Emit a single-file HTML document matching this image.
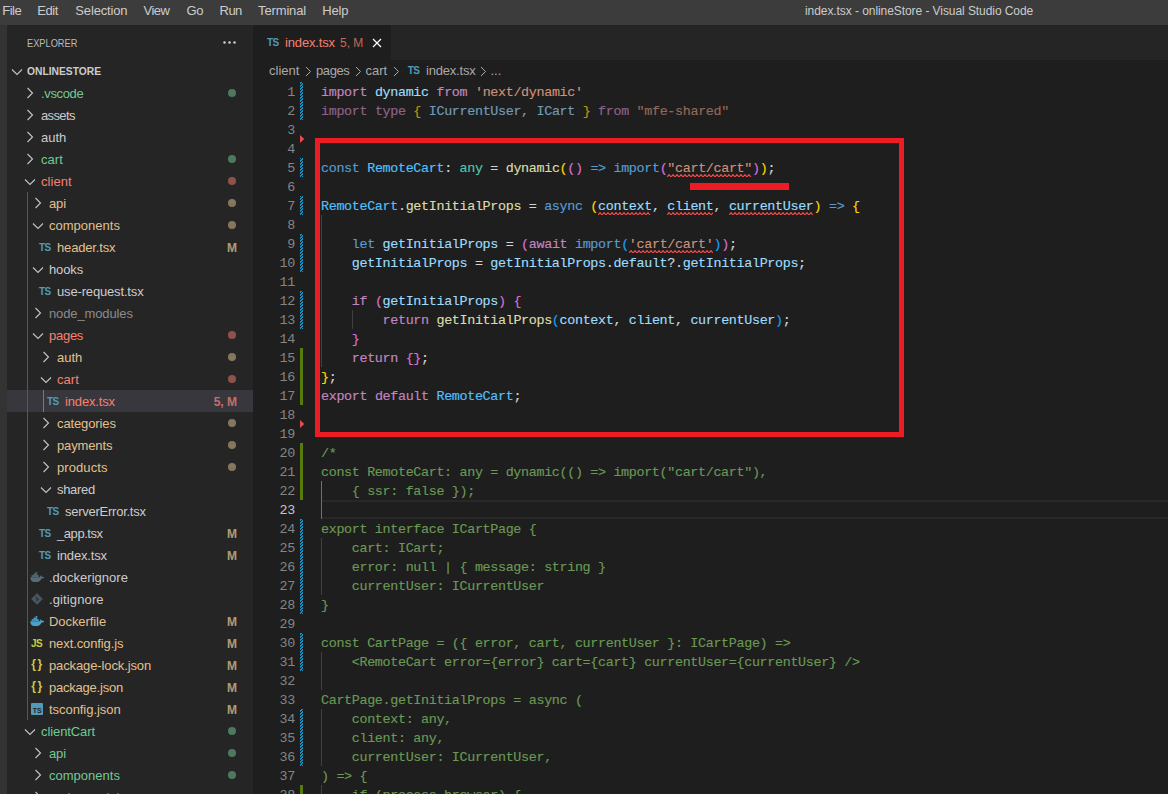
<!DOCTYPE html>
<html lang="en"><head><meta charset="utf-8"><title>index.tsx - onlineStore - Visual Studio Code</title>
<style>
*{box-sizing:border-box;margin:0;padding:0}
html,body{width:1168px;height:794px;overflow:hidden;background:#1e1e1e}
body{position:relative;font-family:"Liberation Sans",sans-serif;color:#ccc;-webkit-font-smoothing:antialiased}
.abs{position:absolute}
#title{left:0;top:0;width:1168px;height:25px;background:#3c3c3c}
#title .mi{position:absolute;top:0;height:21px;line-height:21px;font-size:13px;color:#ccc;white-space:nowrap;letter-spacing:-.15px}
#title .wt{position:absolute;top:1px;height:21px;line-height:21px;font-size:12px;color:#ccc;white-space:nowrap;letter-spacing:-.07px}
#act{left:0;top:25px;width:7px;height:769px;background:#333}
#side{left:7px;top:25px;width:246px;height:769px;background:#252526;overflow:hidden}
#side .hdr{position:absolute;left:20px;top:8px;height:20px;line-height:20px;font-size:11px;color:#bbb;white-space:nowrap;transform:scaleX(.84);transform-origin:0 0}
#side .dots{position:absolute;left:216px;top:16px;width:13px;height:3px}
.row{position:absolute;left:0;width:246px;height:22px;line-height:22px;font-size:13px;white-space:nowrap}
.row.sel{background:#37373d}
.row .lbl{position:absolute;top:1px}
.row .badge{position:absolute;top:1px;right:16px;font-size:12px;font-weight:bold;opacity:.75}
.row .dot{position:absolute;top:7px;left:221px;width:8px;height:8px;border-radius:50%}
.row svg{position:absolute}
.g{color:#73c991}.r{color:#f88070}.t{color:#e2c08d}.d{color:#ccc}.dim{color:#8c8c8c}
.dot.g{background:#4d7a5e}.dot.r{background:#8e524a}.dot.t{background:#86765c}
.ts{position:absolute;top:1px;font-size:10px;font-weight:bold;color:#519aba;letter-spacing:-.6px}
.guide{position:absolute;width:1px;background:#585858}
#tabs{left:253px;top:25px;width:915px;height:35px;background:#252526}
#tab{left:0;top:0;width:138px;height:35px;background:#1e1e1e}
#bc{left:253px;top:60px;width:915px;height:22px;background:#1e1e1e;font-size:13px;line-height:22px;color:#a9a9a9;white-space:nowrap}
#ed{left:253px;top:82px;width:915px;height:712px;background:#1e1e1e;overflow:hidden}
.ln{position:absolute;left:0;width:41.9px;text-align:right;height:19px;line-height:21px;font-family:"Liberation Mono",monospace;font-size:13.4px;letter-spacing:-.341px;color:#858585}
.ln.cur{color:#c6c6c6}
.cl{position:absolute;left:68px;height:19px;line-height:21px;font-family:"Liberation Mono",monospace;font-size:13.4px;letter-spacing:-.341px;-webkit-text-stroke:.15px;white-space:pre;color:#d4d4d4}
.k{color:#c586c0}.v{color:#9cdcfe}.b{color:#569cd6}.ty{color:#4ec9b0}.s{color:#ce9178}.f{color:#dcdcaa}.c{color:#6a9955}.cn{color:#4fc1ff}
.b1{color:#ffd700}.b2{color:#da70d6}.b3{color:#179fff}
.sq{text-decoration:underline wavy #f14c4c;text-decoration-thickness:1px;text-underline-offset:2px;text-decoration-skip-ink:none}
.fade{opacity:.66}
.gm{position:absolute;left:47px;width:3px}
.ga{position:absolute;left:47px;width:3px;background:#587c0c}
.ig{position:absolute;width:1px;background:#404040}
</style></head>
<body>
<div id="title" class="abs">
<span class="mi" style="left:2.2px;letter-spacing:-0.45px">File</span>
<span class="mi" style="left:37.3px;letter-spacing:-0.45px">Edit</span>
<span class="mi" style="left:75.3px;letter-spacing:-0.15px">Selection</span>
<span class="mi" style="left:143.4px;letter-spacing:-0.45px">View</span>
<span class="mi" style="left:186.6px;letter-spacing:-0.4px">Go</span>
<span class="mi" style="left:219.5px;letter-spacing:-0.5px">Run</span>
<span class="mi" style="left:258.1px;letter-spacing:-0.15px">Terminal</span>
<span class="mi" style="left:322.2px;letter-spacing:-0.15px">Help</span>
<span class="wt" style="left:805px">index.tsx - onlineStore - Visual Studio Code</span>
</div>
<div id="act" class="abs"></div>
<div id="side" class="abs">
<div class="hdr">EXPLORER</div>
<svg class="dots" viewBox="0 0 13 3"><circle cx="1.5" cy="1.5" r="1.25" fill="#d0d0d0"/><circle cx="6.5" cy="1.5" r="1.25" fill="#d0d0d0"/><circle cx="11.5" cy="1.5" r="1.25" fill="#d0d0d0"/></svg>
<div class="row" style="top:35px"><svg style="left:4.0px;top:7.5px" width="12" height="8" viewBox="0 0 12 8"><path d="M1 1.5 L6 6.5 L11 1.5" fill="none" stroke="#c5c5c5" stroke-width="1.1"/></svg><span class="lbl" style="left:20px;top:0;font-size:11px;font-weight:bold;color:#ccc;transform:scaleX(.935);transform-origin:0 0">ONLINESTORE</span></div>
<div class="row" style="top:57px"><svg style="left:18.8px;top:5px" width="8" height="12" viewBox="0 0 8 12"><path d="M1.5 1 L6.5 6 L1.5 11" fill="none" stroke="#c5c5c5" stroke-width="1.1"/></svg><span class="lbl g" style="left:34px;letter-spacing:-0.359px">.vscode</span><span class="dot g"></span></div>
<div class="row" style="top:79px"><svg style="left:18.8px;top:5px" width="8" height="12" viewBox="0 0 8 12"><path d="M1.5 1 L6.5 6 L1.5 11" fill="none" stroke="#c5c5c5" stroke-width="1.1"/></svg><span class="lbl d" style="left:34px;letter-spacing:-0.63px">assets</span></div>
<div class="row" style="top:101px"><svg style="left:18.8px;top:5px" width="8" height="12" viewBox="0 0 8 12"><path d="M1.5 1 L6.5 6 L1.5 11" fill="none" stroke="#c5c5c5" stroke-width="1.1"/></svg><span class="lbl d" style="left:34px;letter-spacing:-0.002px">auth</span></div>
<div class="row" style="top:123px"><svg style="left:18.8px;top:5px" width="8" height="12" viewBox="0 0 8 12"><path d="M1.5 1 L6.5 6 L1.5 11" fill="none" stroke="#c5c5c5" stroke-width="1.1"/></svg><span class="lbl g" style="left:34px;letter-spacing:0.032px">cart</span><span class="dot g"></span></div>
<div class="row" style="top:145px"><svg style="left:16.8px;top:7.5px" width="12" height="8" viewBox="0 0 12 8"><path d="M1 1.5 L6 6.5 L11 1.5" fill="none" stroke="#c5c5c5" stroke-width="1.1"/></svg><span class="lbl r" style="left:34px;letter-spacing:0.057px">client</span><span class="dot r"></span></div>
<div class="row" style="top:167px"><svg style="left:26.8px;top:5px" width="8" height="12" viewBox="0 0 8 12"><path d="M1.5 1 L6.5 6 L1.5 11" fill="none" stroke="#c5c5c5" stroke-width="1.1"/></svg><span class="lbl t" style="left:42px;letter-spacing:-0.153px">api</span><span class="dot t"></span></div>
<div class="row" style="top:189px"><svg style="left:24.8px;top:7.5px" width="12" height="8" viewBox="0 0 12 8"><path d="M1 1.5 L6 6.5 L11 1.5" fill="none" stroke="#c5c5c5" stroke-width="1.1"/></svg><span class="lbl t" style="left:42px;letter-spacing:0.017px">components</span><span class="dot t"></span></div>
<div class="row" style="top:211px"><span class="ts" style="left:32px">TS</span><span class="lbl t" style="left:50px;letter-spacing:-0.16px">header.tsx</span><span class="badge t">M</span></div>
<div class="row" style="top:233px"><svg style="left:24.8px;top:7.5px" width="12" height="8" viewBox="0 0 12 8"><path d="M1 1.5 L6 6.5 L11 1.5" fill="none" stroke="#c5c5c5" stroke-width="1.1"/></svg><span class="lbl d" style="left:42px;letter-spacing:-0.12px">hooks</span></div>
<div class="row" style="top:255px"><span class="ts" style="left:32px">TS</span><span class="lbl d" style="left:50px;letter-spacing:-0.159px">use-request.tsx</span></div>
<div class="row" style="top:277px"><svg style="left:26.8px;top:5px" width="8" height="12" viewBox="0 0 8 12"><path d="M1.5 1 L6.5 6 L1.5 11" fill="none" stroke="#c5c5c5" stroke-width="1.1"/></svg><span class="lbl dim" style="left:42px;letter-spacing:-0.125px">node_modules</span></div>
<div class="row" style="top:299px"><svg style="left:24.8px;top:7.5px" width="12" height="8" viewBox="0 0 12 8"><path d="M1 1.5 L6 6.5 L11 1.5" fill="none" stroke="#c5c5c5" stroke-width="1.1"/></svg><span class="lbl r" style="left:42px;letter-spacing:-0.264px">pages</span><span class="dot r"></span></div>
<div class="row" style="top:321px"><svg style="left:34.8px;top:5px" width="8" height="12" viewBox="0 0 8 12"><path d="M1.5 1 L6.5 6 L1.5 11" fill="none" stroke="#c5c5c5" stroke-width="1.1"/></svg><span class="lbl t" style="left:50px;letter-spacing:-0.002px">auth</span><span class="dot t"></span></div>
<div class="row" style="top:343px"><svg style="left:32.8px;top:7.5px" width="12" height="8" viewBox="0 0 12 8"><path d="M1 1.5 L6 6.5 L11 1.5" fill="none" stroke="#c5c5c5" stroke-width="1.1"/></svg><span class="lbl r" style="left:50px;letter-spacing:0.032px">cart</span><span class="dot r"></span></div>
<div class="row sel" style="top:365px"><span class="ts" style="left:40px">TS</span><span class="lbl r" style="left:58px;letter-spacing:-0.157px">index.tsx</span><span class="badge r">5, M</span></div>
<div class="row" style="top:387px"><svg style="left:34.8px;top:5px" width="8" height="12" viewBox="0 0 8 12"><path d="M1.5 1 L6.5 6 L1.5 11" fill="none" stroke="#c5c5c5" stroke-width="1.1"/></svg><span class="lbl t" style="left:50px;letter-spacing:-0.118px">categories</span><span class="dot t"></span></div>
<div class="row" style="top:409px"><svg style="left:34.8px;top:5px" width="8" height="12" viewBox="0 0 8 12"><path d="M1.5 1 L6.5 6 L1.5 11" fill="none" stroke="#c5c5c5" stroke-width="1.1"/></svg><span class="lbl t" style="left:50px;letter-spacing:-0.135px">payments</span><span class="dot t"></span></div>
<div class="row" style="top:431px"><svg style="left:34.8px;top:5px" width="8" height="12" viewBox="0 0 8 12"><path d="M1.5 1 L6.5 6 L1.5 11" fill="none" stroke="#c5c5c5" stroke-width="1.1"/></svg><span class="lbl t" style="left:50px;letter-spacing:0.077px">products</span><span class="dot t"></span></div>
<div class="row" style="top:453px"><svg style="left:32.8px;top:7.5px" width="12" height="8" viewBox="0 0 12 8"><path d="M1 1.5 L6 6.5 L11 1.5" fill="none" stroke="#c5c5c5" stroke-width="1.1"/></svg><span class="lbl d" style="left:50px;letter-spacing:-0.308px">shared</span></div>
<div class="row" style="top:475px"><span class="ts" style="left:40px">TS</span><span class="lbl d" style="left:58px;letter-spacing:-0.255px">serverError.tsx</span></div>
<div class="row" style="top:497px"><span class="ts" style="left:32px">TS</span><span class="lbl d" style="left:50px;letter-spacing:-0.432px">_app.tsx</span><span class="badge t">M</span></div>
<div class="row" style="top:519px"><span class="ts" style="left:32px">TS</span><span class="lbl d" style="left:50px;letter-spacing:-0.157px">index.tsx</span><span class="badge t">M</span></div>
<div class="row" style="top:541px"><svg style="left:22.7px;top:5.5px" width="14.5" height="10.5" viewBox="0 0 14.5 10.5"><path d="M0.2 5.2 H9.6 C10 4.2 10.4 3.6 11 3.2 C11.6 3.8 11.8 4.4 11.7 5 C12.6 4.6 13.6 4.7 14.3 5.2 C13.8 6.2 12.8 6.6 11.6 6.5 C10.6 9 8.4 10.3 5.6 10.3 C2.4 10.3 0.4 8.6 0.2 5.2 Z" fill="#566b77"/><rect x="1.6" y="3.2" width="7.2" height="1.7" fill="#566b77"/><rect x="3.6" y="1.6" width="3.6" height="1.5" fill="#566b77"/><rect x="5.6" y="0" width="1.7" height="1.5" fill="#566b77"/></svg><span class="lbl d" style="left:42px;letter-spacing:0.009px">.dockerignore</span></div>
<div class="row" style="top:563px"><svg style="left:23.8px;top:5px" width="12" height="12" viewBox="0 0 12 12"><rect x="1.8" y="1.8" width="8.4" height="8.4" rx="0.8" transform="rotate(45 6 6)" fill="#46575f"/><path d="M4.6 3.6 L6 5 V8.4 M6 5 L7.8 6.8" stroke="#252526" stroke-width="0.9" fill="none"/></svg><span class="lbl d" style="left:42px;letter-spacing:0.122px">.gitignore</span></div>
<div class="row" style="top:585px"><svg style="left:22.7px;top:5.5px" width="14.5" height="10.5" viewBox="0 0 14.5 10.5"><path d="M0.2 5.2 H9.6 C10 4.2 10.4 3.6 11 3.2 C11.6 3.8 11.8 4.4 11.7 5 C12.6 4.6 13.6 4.7 14.3 5.2 C13.8 6.2 12.8 6.6 11.6 6.5 C10.6 9 8.4 10.3 5.6 10.3 C2.4 10.3 0.4 8.6 0.2 5.2 Z" fill="#4ba0c8"/><rect x="1.6" y="3.2" width="7.2" height="1.7" fill="#4ba0c8"/><rect x="3.6" y="1.6" width="3.6" height="1.5" fill="#4ba0c8"/><rect x="5.6" y="0" width="1.7" height="1.5" fill="#4ba0c8"/></svg><span class="lbl t" style="left:42px;letter-spacing:-0.07px">Dockerfile</span><span class="badge t">M</span></div>
<div class="row" style="top:607px"><span class="ts" style="left:24px;color:#cbcb41">JS</span><span class="lbl t" style="left:42px;letter-spacing:-0.106px">next.config.js</span><span class="badge t">M</span></div>
<div class="row" style="top:629px"><span class="ts" style="left:24.3px;top:-1px;color:#cbcb41;font-size:12px;letter-spacing:1.6px">{}</span><span class="lbl t" style="left:42px;letter-spacing:-0.121px">package-lock.json</span><span class="badge t">M</span></div>
<div class="row" style="top:651px"><span class="ts" style="left:24.3px;top:-1px;color:#cbcb41;font-size:12px;letter-spacing:1.6px">{}</span><span class="lbl t" style="left:42px;letter-spacing:-0.219px">package.json</span><span class="badge t">M</span></div>
<div class="row" style="top:673px"><svg style="left:24px;top:5px" width="12" height="12" viewBox="0 0 12 12"><rect width="12" height="12" rx="1" fill="#519aba"/><text x="6.2" y="10" font-family="Liberation Sans,sans-serif" font-size="7" font-weight="bold" fill="#252526" text-anchor="middle">TS</text></svg><span class="lbl t" style="left:42px;letter-spacing:-0.052px">tsconfig.json</span><span class="badge t">M</span></div>
<div class="row" style="top:695px"><svg style="left:16.8px;top:7.5px" width="12" height="8" viewBox="0 0 12 8"><path d="M1 1.5 L6 6.5 L11 1.5" fill="none" stroke="#c5c5c5" stroke-width="1.1"/></svg><span class="lbl g" style="left:34px;letter-spacing:-0.092px">clientCart</span><span class="dot g"></span></div>
<div class="row" style="top:717px"><svg style="left:26.8px;top:5px" width="8" height="12" viewBox="0 0 8 12"><path d="M1.5 1 L6.5 6 L1.5 11" fill="none" stroke="#c5c5c5" stroke-width="1.1"/></svg><span class="lbl g" style="left:42px;letter-spacing:-0.153px">api</span><span class="dot g"></span></div>
<div class="row" style="top:739px"><svg style="left:26.8px;top:5px" width="8" height="12" viewBox="0 0 8 12"><path d="M1.5 1 L6.5 6 L1.5 11" fill="none" stroke="#c5c5c5" stroke-width="1.1"/></svg><span class="lbl g" style="left:42px;letter-spacing:0.017px">components</span><span class="dot g"></span></div>
<div class="row" style="top:761px"><svg style="left:26.8px;top:5px" width="8" height="12" viewBox="0 0 8 12"><path d="M1.5 1 L6.5 6 L1.5 11" fill="none" stroke="#c5c5c5" stroke-width="1.1"/></svg><span class="lbl dim" style="left:42px;letter-spacing:-0.125px">node_modules</span></div>
<div class="guide" style="left:20px;top:167px;height:528px"></div>
<div class="guide" style="left:36px;top:365px;height:22px;background:#7a7a7a"></div>
</div>
<div id="tabs" class="abs"><div id="tab" class="abs"><span class="ts" style="left:14px;top:1px;line-height:34px">TS</span><span class="abs r" style="left:32px;top:0;line-height:36px;font-size:13px;white-space:nowrap;letter-spacing:-.15px">index.tsx</span><span class="abs" style="left:87px;top:0;line-height:36px;font-size:12px;color:#c4695c;white-space:nowrap">5, M</span><svg class="abs" style="left:119px;top:13px" width="10" height="10" viewBox="0 0 10 10"><path d="M1 1 L9 9 M9 1 L1 9" stroke="#fff" stroke-width="1.2" fill="none"/></svg></div></div>
<div id="bc" class="abs"><span class="abs" style="left:16px">client</span><svg class="abs" style="left:51.5px;top:6px" width="7" height="11" viewBox="0 0 7 11"><path d="M1 1 L5.5 5.5 L1 10" fill="none" stroke="#a9a9a9" stroke-width="1"/></svg><span class="abs" style="left:63px;letter-spacing:-.4px">pages</span><svg class="abs" style="left:101.5px;top:6px" width="7" height="11" viewBox="0 0 7 11"><path d="M1 1 L5.5 5.5 L1 10" fill="none" stroke="#a9a9a9" stroke-width="1"/></svg><span class="abs" style="left:112.5px">cart</span><svg class="abs" style="left:139.5px;top:6px" width="7" height="11" viewBox="0 0 7 11"><path d="M1 1 L5.5 5.5 L1 10" fill="none" stroke="#a9a9a9" stroke-width="1"/></svg><span class="ts" style="left:154.8px;line-height:21px;top:0">TS</span><span class="abs" style="left:173px;letter-spacing:-.2px">index.tsx</span><svg class="abs" style="left:227px;top:6px" width="7" height="11" viewBox="0 0 7 11"><path d="M1 1 L5.5 5.5 L1 10" fill="none" stroke="#a9a9a9" stroke-width="1"/></svg><span class="abs" style="left:237.5px">...</span></div>
<div id="ed" class="abs">
<div class="abs" style="left:68px;top:418px;width:847px;height:19px;border-top:2px solid #282828;border-bottom:2px solid #282828"></div>
<div class="ln" style="top:0px">1</div><div class="cl" style="top:0px"><span class="k">import</span> <span class="v">dynamic</span> <span class="k">from</span> <span class="s">&#x27;next/dynamic&#x27;</span></div>
<div class="ln" style="top:19px">2</div><div class="cl" style="top:19px"><span class="fade"><span class="k">import</span> <span class="k">type</span> <span class="b1">{</span> <span class="v">ICurrentUser</span>, <span class="v">ICart</span> <span class="b1">}</span> <span class="k">from</span> <span class="s">&quot;mfe-shared&quot;</span></span></div>
<div class="ln" style="top:38px">3</div>
<div class="ln" style="top:57px">4</div>
<div class="ln" style="top:76px">5</div><div class="cl" style="top:76px"><span class="b">const</span> <span class="cn">RemoteCart</span>: <span class="ty">any</span> = <span class="f">dynamic</span><span class="b1">(</span><span class="b2">()</span> <span class="b">=&gt;</span> <span class="b">import</span><span class="b2">(</span><span class="s">"cart/cart"</span><span class="b2">)</span><span class="b1">)</span>;</div>
<div class="ln" style="top:95px">6</div>
<div class="ln" style="top:114px">7</div><div class="cl" style="top:114px"><span class="cn">RemoteCart</span>.<span class="f">getInitialProps</span> = <span class="b">async</span> <span class="b1">(</span><span class="v">context</span>, <span class="v">client</span>, <span class="v">currentUser</span><span class="b1">)</span> <span class="b">=&gt;</span> <span class="b1">{</span></div>
<div class="ln" style="top:133px">8</div>
<div class="ln" style="top:152px">9</div><div class="cl" style="top:152px">    <span class="b">let</span> <span class="v">getInitialProps</span> = <span class="b2">(</span><span class="k">await</span> <span class="b">import</span><span class="b3">(</span><span class="s">'cart/cart'</span><span class="b3">)</span><span class="b2">)</span>;</div>
<div class="ln" style="top:171px">10</div><div class="cl" style="top:171px">    <span class="v">getInitialProps</span> = <span class="v">getInitialProps</span>.<span class="v">default</span>?.<span class="v">getInitialProps</span>;</div>
<div class="ln" style="top:190px">11</div>
<div class="ln" style="top:209px">12</div><div class="cl" style="top:209px">    <span class="k">if</span> <span class="b2">(</span><span class="v">getInitialProps</span><span class="b2">)</span> <span class="b2">{</span></div>
<div class="ln" style="top:228px">13</div><div class="cl" style="top:228px">        <span class="k">return</span> <span class="f">getInitialProps</span><span class="b3">(</span><span class="v">context</span>, <span class="v">client</span>, <span class="v">currentUser</span><span class="b3">)</span>;</div>
<div class="ln" style="top:247px">14</div><div class="cl" style="top:247px">    <span class="b2">}</span></div>
<div class="ln" style="top:266px">15</div><div class="cl" style="top:266px">    <span class="k">return</span> <span class="b2">{}</span>;</div>
<div class="ln" style="top:285px">16</div><div class="cl" style="top:285px"><span class="b1">}</span>;</div>
<div class="ln" style="top:304px">17</div><div class="cl" style="top:304px"><span class="k">export</span> <span class="k">default</span> <span class="cn">RemoteCart</span>;</div>
<div class="ln" style="top:323px">18</div>
<div class="ln" style="top:342px">19</div>
<div class="ln" style="top:361px">20</div><div class="cl" style="top:361px"><span class="c">/*</span></div>
<div class="ln" style="top:380px">21</div><div class="cl" style="top:380px"><span class="c">const RemoteCart: any = dynamic(() =&gt; import(&quot;cart/cart&quot;),</span></div>
<div class="ln" style="top:399px">22</div><div class="cl" style="top:399px"><span class="c">    { ssr: false });</span></div>
<div class="ln cur" style="top:418px">23</div>
<div class="ln" style="top:437px">24</div><div class="cl" style="top:437px"><span class="c">export interface ICartPage {</span></div>
<div class="ln" style="top:456px">25</div><div class="cl" style="top:456px"><span class="c">    cart: ICart;</span></div>
<div class="ln" style="top:475px">26</div><div class="cl" style="top:475px"><span class="c">    error: null | { message: string }</span></div>
<div class="ln" style="top:494px">27</div><div class="cl" style="top:494px"><span class="c">    currentUser: ICurrentUser</span></div>
<div class="ln" style="top:513px">28</div><div class="cl" style="top:513px"><span class="c">}</span></div>
<div class="ln" style="top:532px">29</div>
<div class="ln" style="top:551px">30</div><div class="cl" style="top:551px"><span class="c">const CartPage = ({ error, cart, currentUser }: ICartPage) =&gt;</span></div>
<div class="ln" style="top:570px">31</div><div class="cl" style="top:570px"><span class="c">    &lt;RemoteCart error={error} cart={cart} currentUser={currentUser} /&gt;</span></div>
<div class="ln" style="top:589px">32</div>
<div class="ln" style="top:608px">33</div><div class="cl" style="top:608px"><span class="c">CartPage.getInitialProps = async (</span></div>
<div class="ln" style="top:627px">34</div><div class="cl" style="top:627px"><span class="c">    context: any,</span></div>
<div class="ln" style="top:646px">35</div><div class="cl" style="top:646px"><span class="c">    client: any,</span></div>
<div class="ln" style="top:665px">36</div><div class="cl" style="top:665px"><span class="c">    currentUser: ICurrentUser,</span></div>
<div class="ln" style="top:684px">37</div><div class="cl" style="top:684px"><span class="c">) =&gt; {</span></div>
<div class="ln" style="top:703px">38</div><div class="cl" style="top:703px"><span class="c">    if (process.browser) {</span></div>
<div class="gm" style="top:0px;height:38px;background:repeating-linear-gradient(-45deg,#1a90c2 0,#1a90c2 1.15px,#1e1e1e 1.15px,#1e1e1e 2.1213px)"></div>
<div class="gm" style="top:76px;height:19px;background:repeating-linear-gradient(-45deg,#1a90c2 0,#1a90c2 1.15px,#1e1e1e 1.15px,#1e1e1e 2.1213px)"></div>
<div class="gm" style="top:114px;height:19px;background:repeating-linear-gradient(-45deg,#1a90c2 0,#1a90c2 1.15px,#1e1e1e 1.15px,#1e1e1e 2.1213px)"></div>
<div class="gm" style="top:152px;height:38px;background:repeating-linear-gradient(-45deg,#1a90c2 0,#1a90c2 1.15px,#1e1e1e 1.15px,#1e1e1e 2.1213px)"></div>
<div class="gm" style="top:209px;height:38px;background:repeating-linear-gradient(-45deg,#1a90c2 0,#1a90c2 1.15px,#1e1e1e 1.15px,#1e1e1e 2.1213px)"></div>
<div class="gm" style="top:437px;height:95px;background:repeating-linear-gradient(-45deg,#1a90c2 0,#1a90c2 1.15px,#1e1e1e 1.15px,#1e1e1e 2.1213px)"></div>
<div class="gm" style="top:551px;height:38px;background:repeating-linear-gradient(-45deg,#1a90c2 0,#1a90c2 1.15px,#1e1e1e 1.15px,#1e1e1e 2.1213px)"></div>
<div class="gm" style="top:627px;height:57px;background:repeating-linear-gradient(-45deg,#1a90c2 0,#1a90c2 1.15px,#1e1e1e 1.15px,#1e1e1e 2.1213px)"></div>
<div class="ga" style="top:266px;height:57px"></div>
<div class="ga" style="top:361px;height:57px"></div>
<div class="ga" style="top:703px;height:19px"></div>
<svg class="abs" style="left:47px;top:53px" width="4.2" height="8" viewBox="0 0 4.2 8"><path d="M0 0 L4.2 4 L0 8 Z" fill="#ee4c4c"/></svg>
<svg class="abs" style="left:47px;top:338px" width="4.2" height="8" viewBox="0 0 4.2 8"><path d="M0 0 L4.2 4 L0 8 Z" fill="#ee4c4c"/></svg>
<div class="ig" style="left:68px;top:133px;height:152px;background:#404040"></div>
<div class="ig" style="left:99px;top:228px;height:19px;background:#404040"></div>
<div class="ig" style="left:68px;top:399px;height:38px;background:#707070"></div>
<div class="ig" style="left:68px;top:456px;height:57px;background:#404040"></div>
<div class="ig" style="left:68px;top:570px;height:38px;background:#404040"></div>
<div class="ig" style="left:68px;top:627px;height:57px;background:#404040"></div>
<div class="ig" style="left:68px;top:703px;height:19px;background:#404040"></div>
<svg class="abs" style="left:414.0px;top:91.8px" width="84.7" height="3.6" viewBox="0 0 84.7 3.6"><polyline points="0.0,3.0 2.0,0.6 4.0,3.0 6.0,0.6 8.0,3.0 10.0,0.6 12.0,3.0 14.0,0.6 16.0,3.0 18.0,0.6 20.0,3.0 22.0,0.6 24.0,3.0 26.0,0.6 28.0,3.0 30.0,0.6 32.0,3.0 34.0,0.6 36.0,3.0 38.0,0.6 40.0,3.0 42.0,0.6 44.0,3.0 46.0,0.6 48.0,3.0 50.0,0.6 52.0,3.0 54.0,0.6 56.0,3.0 58.0,0.6 60.0,3.0 62.0,0.6 64.0,3.0 66.0,0.6 68.0,3.0 70.0,0.6 72.0,3.0 74.0,0.6 76.0,3.0 78.0,0.6 80.0,3.0 82.0,0.6 84.0,3.0" fill="none" stroke="#f14c4c" stroke-width="1.15"/></svg>
<svg class="abs" style="left:344.7px;top:129.8px" width="53.9" height="3.6" viewBox="0 0 53.9 3.6"><polyline points="0.0,3.0 2.0,0.6 4.0,3.0 6.0,0.6 8.0,3.0 10.0,0.6 12.0,3.0 14.0,0.6 16.0,3.0 18.0,0.6 20.0,3.0 22.0,0.6 24.0,3.0 26.0,0.6 28.0,3.0 30.0,0.6 32.0,3.0 34.0,0.6 36.0,3.0 38.0,0.6 40.0,3.0 42.0,0.6 44.0,3.0 46.0,0.6 48.0,3.0 50.0,0.6 52.0,3.0" fill="none" stroke="#f14c4c" stroke-width="1.15"/></svg>
<svg class="abs" style="left:414.0px;top:129.8px" width="46.2" height="3.6" viewBox="0 0 46.2 3.6"><polyline points="0.0,3.0 2.0,0.6 4.0,3.0 6.0,0.6 8.0,3.0 10.0,0.6 12.0,3.0 14.0,0.6 16.0,3.0 18.0,0.6 20.0,3.0 22.0,0.6 24.0,3.0 26.0,0.6 28.0,3.0 30.0,0.6 32.0,3.0 34.0,0.6 36.0,3.0 38.0,0.6 40.0,3.0 42.0,0.6 44.0,3.0 46.0,0.6" fill="none" stroke="#f14c4c" stroke-width="1.15"/></svg>
<svg class="abs" style="left:475.6px;top:129.8px" width="84.7" height="3.6" viewBox="0 0 84.7 3.6"><polyline points="0.0,3.0 2.0,0.6 4.0,3.0 6.0,0.6 8.0,3.0 10.0,0.6 12.0,3.0 14.0,0.6 16.0,3.0 18.0,0.6 20.0,3.0 22.0,0.6 24.0,3.0 26.0,0.6 28.0,3.0 30.0,0.6 32.0,3.0 34.0,0.6 36.0,3.0 38.0,0.6 40.0,3.0 42.0,0.6 44.0,3.0 46.0,0.6 48.0,3.0 50.0,0.6 52.0,3.0 54.0,0.6 56.0,3.0 58.0,0.6 60.0,3.0 62.0,0.6 64.0,3.0 66.0,0.6 68.0,3.0 70.0,0.6 72.0,3.0 74.0,0.6 76.0,3.0 78.0,0.6 80.0,3.0 82.0,0.6 84.0,3.0" fill="none" stroke="#f14c4c" stroke-width="1.15"/></svg>
<svg class="abs" style="left:375.5px;top:167.8px" width="84.7" height="3.6" viewBox="0 0 84.7 3.6"><polyline points="0.0,3.0 2.0,0.6 4.0,3.0 6.0,0.6 8.0,3.0 10.0,0.6 12.0,3.0 14.0,0.6 16.0,3.0 18.0,0.6 20.0,3.0 22.0,0.6 24.0,3.0 26.0,0.6 28.0,3.0 30.0,0.6 32.0,3.0 34.0,0.6 36.0,3.0 38.0,0.6 40.0,3.0 42.0,0.6 44.0,3.0 46.0,0.6 48.0,3.0 50.0,0.6 52.0,3.0 54.0,0.6 56.0,3.0 58.0,0.6 60.0,3.0 62.0,0.6 64.0,3.0 66.0,0.6 68.0,3.0 70.0,0.6 72.0,3.0 74.0,0.6 76.0,3.0 78.0,0.6 80.0,3.0 82.0,0.6 84.0,3.0" fill="none" stroke="#f14c4c" stroke-width="1.15"/></svg>
<div class="abs" style="left:62px;top:56px;width:589px;height:299px;border:5px solid #ed1c24"></div>
<div class="abs" style="left:437px;top:101px;width:99px;height:7px;background:#ed1c24"></div>
</div>
</body></html>
